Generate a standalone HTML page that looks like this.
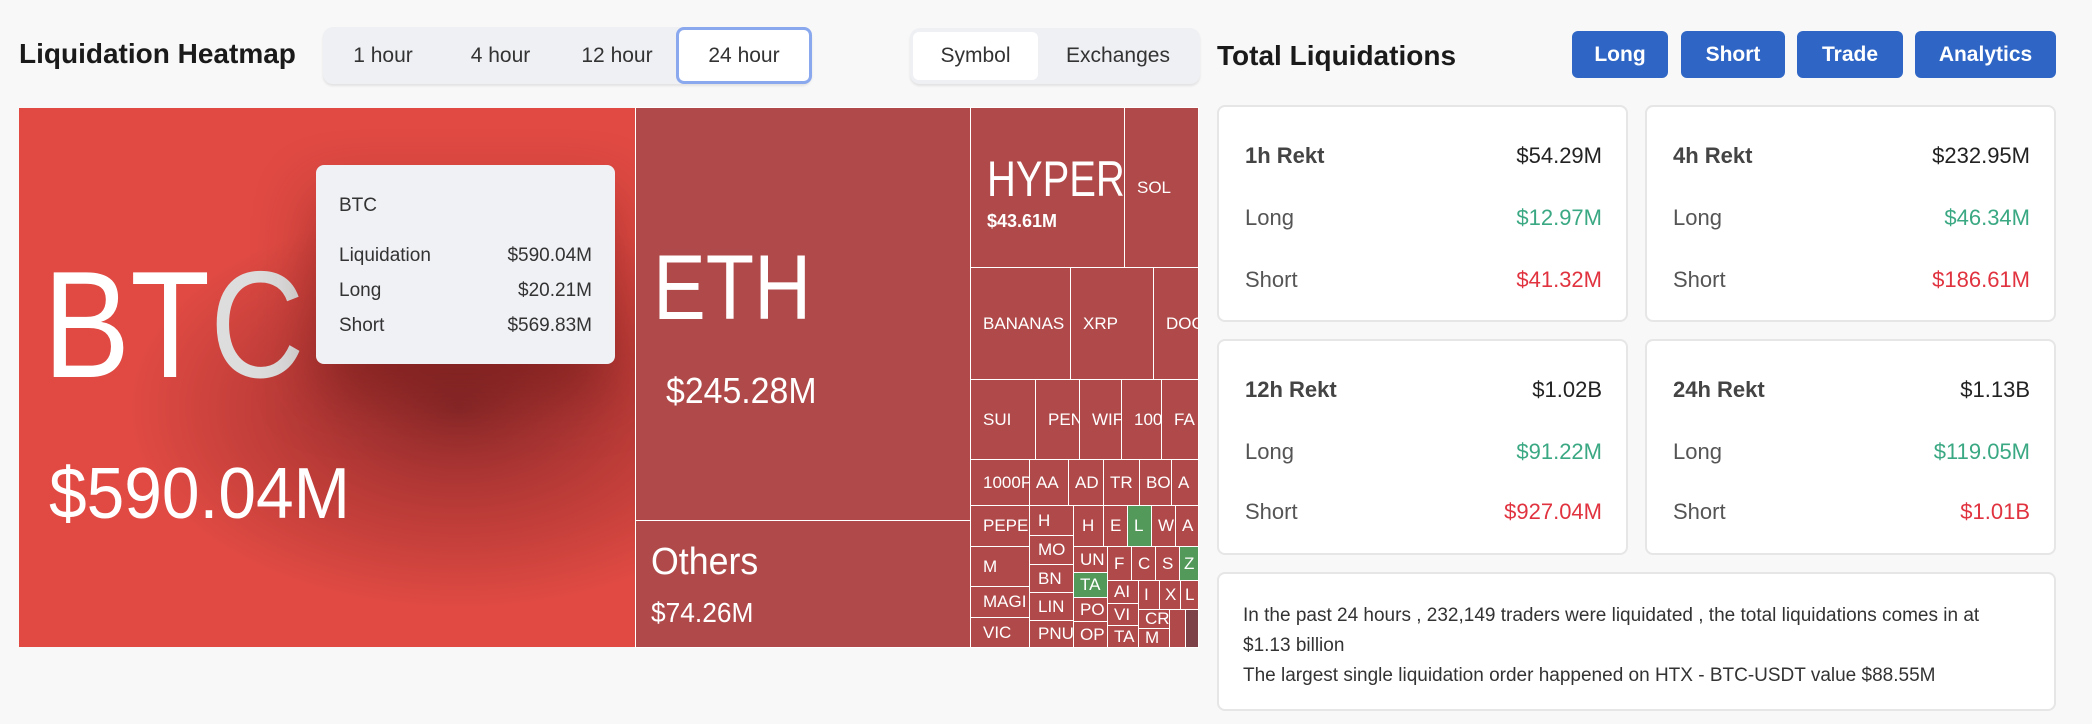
<!DOCTYPE html>
<html><head><meta charset="utf-8"><style>
*{box-sizing:border-box;margin:0;padding:0}
body{width:2092px;height:724px;background:#f8f8f8;font-family:"Liberation Sans",sans-serif;position:relative;overflow:hidden;color:#222}
.a{position:absolute}
.c{position:absolute;background:#b0494a;border:1px solid #fff;color:#fff;font-size:17px;overflow:hidden;white-space:nowrap;display:flex;align-items:center;padding-left:12px}
.g{background:#53995a}
.tab{position:absolute;top:0;height:100%;display:flex;align-items:center;justify-content:center;font-size:21px;color:#333}
.card{position:absolute;background:#fff;border:2px solid #e6e6e6;border-radius:8px}
.row{position:absolute;left:26px;right:24px;display:flex;justify-content:space-between;font-size:22px;color:#555}
.row b{font-weight:normal}
.btn{position:absolute;top:31px;height:47px;background:#2f66c5;color:#fff;border-radius:6px;font-weight:bold;font-size:21px;display:flex;align-items:center;justify-content:center}
.sx{transform-origin:0 0;transform:scaleX(.86);white-space:nowrap}
.sy{transform-origin:0 0;transform:scaleX(.94);white-space:nowrap}
</style></head><body>
<div class="a" style="left:19px;top:38px;font-size:28px;font-weight:bold;color:#1a1a1a">Liquidation Heatmap</div>
<div class="a" style="left:323px;top:27px;width:489px;height:57px;background:#eff0f4;border-radius:10px;box-shadow:0 2px 2px #e2e2e2">
<div class="tab" style="left:0;width:120px">1 hour</div>
<div class="tab" style="left:120px;width:115px">4 hour</div>
<div class="tab" style="left:235px;width:118px">12 hour</div>
<div class="tab" style="left:353px;width:136px;background:#fff;border:3px solid #8aa8ee;border-radius:8px">24 hour</div>
</div>
<div class="a" style="left:910px;top:28px;width:290px;height:56px;background:#eff0f4;border-radius:10px;box-shadow:0 2px 2px #e2e2e2">
<div class="tab" style="left:3px;top:4px;height:48px;width:125px;background:#fff;border-radius:6px">Symbol</div>
<div class="tab" style="left:128px;width:160px">Exchanges</div>
</div>
<!-- treemap -->
<div class="a" style="left:19px;top:108px;width:616px;height:539px;background:radial-gradient(ellipse 330px 200px at 440px 300px,#8e2a2a 0%,#b53936 45%,#e04a43 100%);overflow:hidden">
<div class="a sx" style="left:24px;top:130px;font-size:152px;color:#fff">BT<span style="color:#ddd">C</span></div>
<div class="a sy" style="left:30px;top:345px;font-size:72px;color:#fff">$590.04M</div>
</div>
<div class="a" style="left:316px;top:165px;width:299px;height:199px;background:#f0f1f5;border-radius:8px;box-shadow:0 30px 60px rgba(60,0,0,.35);font-size:19px;color:#333">
<div class="a" style="left:23px;top:30px">BTC</div>
<div class="a" style="left:23px;top:80px">Liquidation</div><div class="a" style="right:23px;top:80px">$590.04M</div>
<div class="a" style="left:23px;top:115px">Long</div><div class="a" style="right:23px;top:115px">$20.21M</div>
<div class="a" style="left:23px;top:150px">Short</div><div class="a" style="right:23px;top:150px">$569.83M</div>
</div>
<div class="c" style="left:635px;top:107px;width:336px;height:414px;display:block;padding:0">
<div class="a sx" style="left:17px;top:128px;font-size:92px">ETH</div>
<div class="a sy" style="left:30px;top:262px;font-size:36px">$245.28M</div></div>
<div class="c" style="left:635px;top:520px;width:336px;height:128px;display:block;padding:0">
<div class="a sy" style="left:15px;top:20px;font-size:38px">Others</div>
<div class="a sy" style="left:15px;top:76px;font-size:28px">$74.26M</div></div>
<div class="c" style="left:970px;top:107px;width:155px;height:161px;display:block;padding:0">
<div class="a sx" style="left:16px;top:42px;font-size:50px;transform:scaleX(.8)">HYPER</div>
<div class="a" style="left:16px;top:103px;font-size:18px;font-weight:bold">$43.61M</div></div>
<div class="c" style="left:1124px;top:107px;width:75px;height:161px">SOL</div>
<div class="c" style="left:970px;top:267px;width:101px;height:113px">BANANAS</div>
<div class="c" style="left:1070px;top:267px;width:84px;height:113px">XRP</div>
<div class="c" style="left:1153px;top:267px;width:46px;height:113px">DOGE</div>
<div class="c" style="left:970px;top:379px;width:66px;height:81px">SUI</div>
<div class="c" style="left:1035px;top:379px;width:45px;height:81px">PEN</div>
<div class="c" style="left:1079px;top:379px;width:43px;height:81px">WIF</div>
<div class="c" style="left:1121px;top:379px;width:41px;height:81px">100</div>
<div class="c" style="left:1161px;top:379px;width:38px;height:81px">FA</div>
<div class="c" style="left:970px;top:459px;width:60px;height:47px">1000P</div>
<div class="c" style="left:1029px;top:459px;width:40px;height:47px;padding-left:6px">AA</div>
<div class="c" style="left:1068px;top:459px;width:36px;height:47px;padding-left:6px">AD</div>
<div class="c" style="left:1103px;top:459px;width:37px;height:47px;padding-left:6px">TR</div>
<div class="c" style="left:1139px;top:459px;width:33px;height:47px;padding-left:6px">BO</div>
<div class="c" style="left:1171px;top:459px;width:28px;height:47px;padding-left:6px">A</div>
<div class="c" style="left:970px;top:505px;width:60px;height:42px">PEPE</div>
<div class="c" style="left:970px;top:546px;width:60px;height:41px">M</div>
<div class="c" style="left:970px;top:586px;width:60px;height:32px">MAGI</div>
<div class="c" style="left:970px;top:617px;width:60px;height:31px">VIC</div>
<div class="c" style="left:1029px;top:505px;width:45px;height:31px;padding-left:8px">H</div>
<div class="c" style="left:1029px;top:535px;width:45px;height:30px;padding-left:8px">MO</div>
<div class="c" style="left:1029px;top:564px;width:45px;height:29px;padding-left:8px">BN</div>
<div class="c" style="left:1029px;top:592px;width:45px;height:29px;padding-left:8px">LIN</div>
<div class="c" style="left:1029px;top:620px;width:45px;height:28px;padding-left:8px">PNU</div>
<div class="c" style="left:1073px;top:505px;width:31px;height:42px;padding-left:8px">H</div>
<div class="c" style="left:1103px;top:505px;width:25px;height:42px;padding-left:6px">E</div>
<div class="c g" style="left:1127px;top:505px;width:25px;height:42px;padding-left:6px">L</div>
<div class="c" style="left:1151px;top:505px;width:25px;height:42px;padding-left:6px">W</div>
<div class="c" style="left:1175px;top:505px;width:24px;height:42px;padding-left:6px">A</div>
<div class="c" style="left:1073px;top:546px;width:35px;height:27px;padding-left:6px">UN</div>
<div class="c g" style="left:1073px;top:572px;width:35px;height:26px;padding-left:6px">TA</div>
<div class="c" style="left:1073px;top:597px;width:35px;height:25px;padding-left:6px">PO</div>
<div class="c" style="left:1073px;top:621px;width:35px;height:27px;padding-left:6px">OP</div>
<div class="c" style="left:1107px;top:546px;width:25px;height:35px;padding-left:6px">F</div>
<div class="c" style="left:1131px;top:546px;width:25px;height:35px;padding-left:6px">C</div>
<div class="c" style="left:1155px;top:546px;width:25px;height:35px;padding-left:6px">S</div>
<div class="c g" style="left:1179px;top:546px;width:20px;height:35px;padding-left:4px">Z</div>
<div class="c" style="left:1107px;top:580px;width:32px;height:24px;padding-left:6px">AI</div>
<div class="c" style="left:1107px;top:603px;width:32px;height:23px;padding-left:6px">VI</div>
<div class="c" style="left:1107px;top:625px;width:32px;height:23px;padding-left:6px">TA</div>
<div class="c" style="left:1138px;top:580px;width:22px;height:30px;padding-left:5px">I</div>
<div class="c" style="left:1159px;top:580px;width:22px;height:30px;padding-left:5px">X</div>
<div class="c" style="left:1180px;top:580px;width:19px;height:30px;padding-left:4px">L</div>
<div class="c" style="left:1138px;top:609px;width:32px;height:20px;padding-left:6px">CR</div>
<div class="c" style="left:1138px;top:628px;width:32px;height:20px;padding-left:6px">M</div>
<div class="c" style="left:1169px;top:609px;width:17px;height:39px"></div>
<div class="c" style="left:1185px;top:609px;width:14px;height:39px;background:#7d4248"></div>
<!-- right -->
<div class="a" style="left:1217px;top:40px;font-size:28px;font-weight:bold;color:#1a1a1a">Total Liquidations</div>
<div class="btn" style="left:1572px;width:96px">Long</div>
<div class="btn" style="left:1681px;width:104px">Short</div>
<div class="btn" style="left:1797px;width:106px">Trade</div>
<div class="btn" style="left:1915px;width:141px">Analytics</div>
<div class="card" style="left:1217px;top:105px;width:411px;height:217px">
<div class="row" style="top:36px;font-weight:bold;color:#444"><span>1h Rekt</span><b style="color:#222">$54.29M</b></div>
<div class="row" style="top:98px"><span>Long</span><b style="color:#3aa882">$12.97M</b></div>
<div class="row" style="top:160px"><span>Short</span><b style="color:#e0333f">$41.32M</b></div></div>
<div class="card" style="left:1645px;top:105px;width:411px;height:217px">
<div class="row" style="top:36px;font-weight:bold;color:#444"><span>4h Rekt</span><b style="color:#222">$232.95M</b></div>
<div class="row" style="top:98px"><span>Long</span><b style="color:#3aa882">$46.34M</b></div>
<div class="row" style="top:160px"><span>Short</span><b style="color:#e0333f">$186.61M</b></div></div>
<div class="card" style="left:1217px;top:339px;width:411px;height:216px">
<div class="row" style="top:36px;font-weight:bold;color:#444"><span>12h Rekt</span><b style="color:#222">$1.02B</b></div>
<div class="row" style="top:98px"><span>Long</span><b style="color:#3aa882">$91.22M</b></div>
<div class="row" style="top:158px"><span>Short</span><b style="color:#e0333f">$927.04M</b></div></div>
<div class="card" style="left:1645px;top:339px;width:411px;height:216px">
<div class="row" style="top:36px;font-weight:bold;color:#444"><span>24h Rekt</span><b style="color:#222">$1.13B</b></div>
<div class="row" style="top:98px"><span>Long</span><b style="color:#3aa882">$119.05M</b></div>
<div class="row" style="top:158px"><span>Short</span><b style="color:#e0333f">$1.01B</b></div></div>
<div class="card" style="left:1217px;top:572px;width:839px;height:139px">
<div class="a" style="left:24px;top:27px;width:790px;font-size:19px;line-height:30px;color:#333">In the past 24 hours , 232,149 traders were liquidated , the total liquidations comes in at<br>$1.13 billion<br>The largest single liquidation order happened on HTX - BTC-USDT value $88.55M</div></div>
</body></html>
